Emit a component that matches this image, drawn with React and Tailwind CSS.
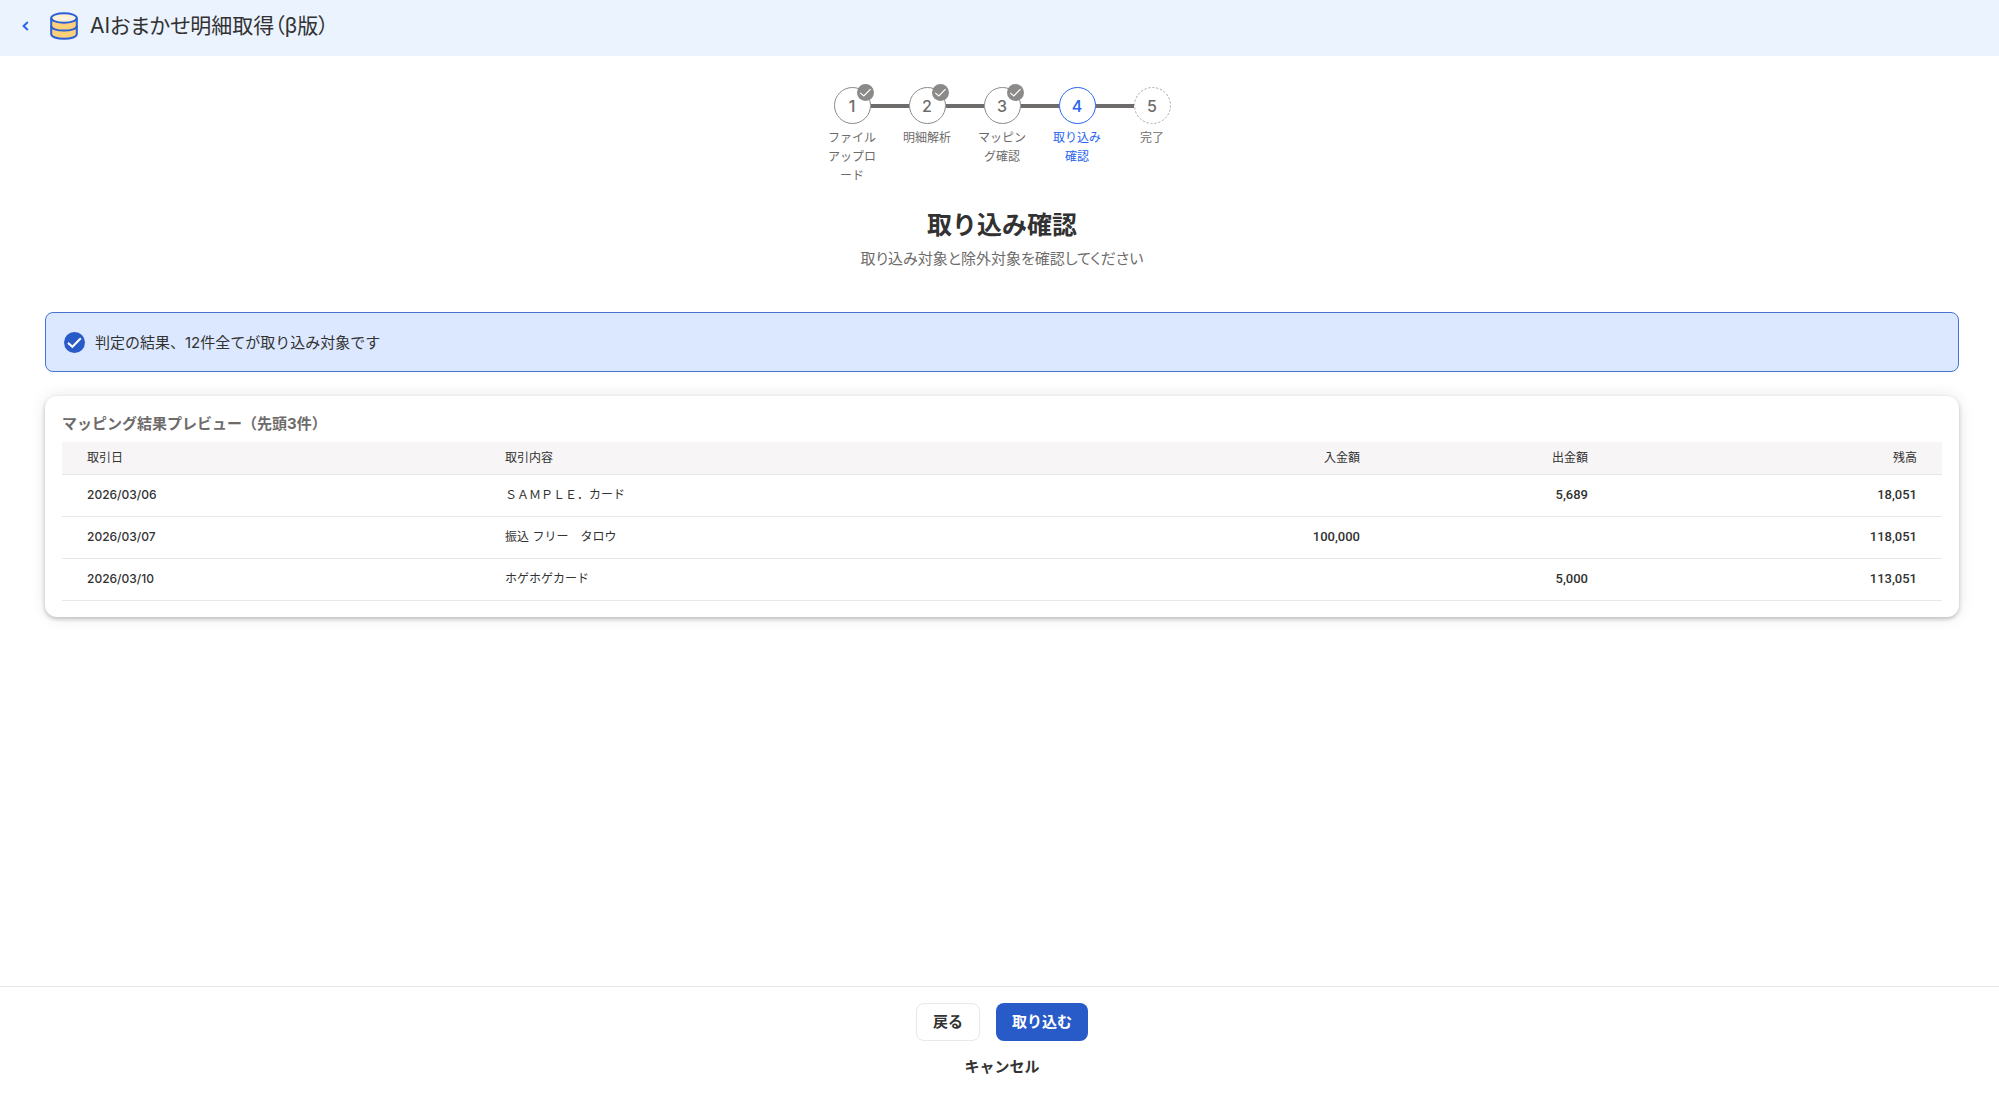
import clsx from "clsx";

const steps = [
  { label: "ファイルアップロード", state: "done" },
  { label: "明細解析", state: "done" },
  { label: "マッピング確認", state: "done" },
  { label: "取り込み確認", state: "current" },
  { label: "完了", state: "todo" },
];

const rows = [
  { date: "2026/03/06", detail: "ＳＡＭＰＬＥ．カード", deposit: "", withdrawal: "5,689", balance: "18,051" },
  { date: "2026/03/07", detail: "振込 フリー　タロウ", deposit: "100,000", withdrawal: "", balance: "118,051" },
  { date: "2026/03/10", detail: "ホゲホゲカード", deposit: "", withdrawal: "5,000", balance: "113,051" },
];

function CheckCircle({ className, strokeWidth = 2 }) {
  return (
    <svg viewBox="0 0 20 20" className={className} aria-hidden="true">
      <circle cx="10" cy="10" r="10" fill="currentColor" />
      <path d="M3.8 10.4 8 14 16 6" fill="none" stroke="#fff" strokeWidth={strokeWidth} />
    </svg>
  );
}

function DatabaseIcon() {
  return (
    <svg viewBox="0 0 28 28" className="size-7" aria-hidden="true">
      <path d="M1 5v18c0 2.4 5.8 4 13 4s13-1.6 13-4V5z" fill="#ffd07a" />
      <ellipse cx="14" cy="6" rx="12.8" ry="4.8" fill="#fff0d7" />
      <g fill="none" stroke="#2a5fd6" strokeWidth="2">
        <ellipse cx="14" cy="6" rx="12.8" ry="4.8" />
        <path d="M1.2 6v16c0 3 5.8 4.8 12.8 4.8s12.8-1.8 12.8-4.8V6" />
        <path d="M1.2 14c0 2.8 5.8 4.6 12.8 4.6s12.8-1.8 12.8-4.6" />
      </g>
    </svg>
  );
}

function Header() {
  return (
    <header className="flex h-14 items-center bg-[#ebf3ff] px-5 pb-1">
      <button type="button" aria-label="戻る" className="text-[#2864f0]">
        <svg viewBox="0 0 12 12" className="size-3" aria-hidden="true">
          <path d="M7.8 2 3.6 6 7.8 10" fill="none" stroke="currentColor" strokeWidth="2" />
        </svg>
      </button>
      <div className="ml-[18px] flex items-center gap-3">
        <DatabaseIcon />
        <h1 className="text-[21px] leading-8 [font-feature-settings:'palt']">AIおまかせ明細取得（β版）</h1>
      </div>
    </header>
  );
}

function Stepper() {
  return (
    <ol className="flex justify-center">
      {steps.map(({ label, state }, i) => (
        <li
          key={label}
          aria-current={state === "current" ? "step" : undefined}
          className={clsx("w-[75px]", state === "current" ? "text-[#2864f0]" : "text-[#6e6b6b]")}
        >
          <div className="flex items-center">
            <span className={clsx("h-1 flex-1", i > 0 && "bg-[#6e6b6b]")} />
            <span
              className={clsx(
                "relative flex size-[37px] items-center justify-center rounded-full border text-base font-medium",
                state === "done" && "border-[#8c8989]",
                state === "current" && "border-[#2864f0]",
                state === "todo" && "border-transparent"
              )}
            >
              {i + 1}
              {state === "done" && (
                <CheckCircle strokeWidth={1.4} className="absolute -top-1 -right-1 size-[17px] text-[#8c8989]" />
              )}
              {state === "todo" && (
                <svg viewBox="0 0 37 37" className="absolute -inset-px size-[37px]" aria-hidden="true">
                  <circle cx="18.5" cy="18.5" r="18" fill="none" stroke="#aaa7a7" strokeDasharray="2.2 1.8" />
                </svg>
              )}
            </span>
            <span className={clsx("h-1 flex-1", i < steps.length - 1 && "bg-[#6e6b6b]")} />
          </div>
          <p className="mx-auto mt-1 w-[50px] text-center text-xs leading-[19px] break-all">{label}</p>
        </li>
      ))}
    </ol>
  );
}

function Amount({ children }) {
  return (
    <td className="px-[25px] text-right font-['Roboto',sans-serif] text-[13px] font-medium tabular-nums">{children}</td>
  );
}

function PreviewTable() {
  return (
    <section className="rounded-xl bg-white px-[17px] py-4 shadow-[0_0_16px_rgba(0,0,0,0.1),0_2px_4px_rgba(0,0,0,0.22)]">
      <h3 className="mb-[7px] text-[15px] leading-[23px] font-bold text-[#6e6b6b]">
        マッピング結果プレビュー（先頭3件）
      </h3>
      <table className="w-full table-fixed text-xs">
        <thead>
          <tr className="h-8 border-b border-[#e9e7e7] bg-[#f7f5f5] text-left">
            <th className="w-[418px] px-[25px] font-normal">取引日</th>
            <th className="px-[25px] font-normal">取引内容</th>
            <th className="w-[228px] px-[25px] text-right font-normal">入金額</th>
            <th className="w-[228px] px-[25px] text-right font-normal">出金額</th>
            <th className="w-[329px] px-[25px] text-right font-normal">残高</th>
          </tr>
        </thead>
        <tbody>
          {rows.map((row) => (
            <tr key={row.date} className="h-[42px] border-b border-[#e9e7e7]">
              <td className="px-[25px] font-medium">{row.date}</td>
              <td className="px-[25px]">{row.detail}</td>
              <Amount>{row.deposit}</Amount>
              <Amount>{row.withdrawal}</Amount>
              <Amount>{row.balance}</Amount>
            </tr>
          ))}
        </tbody>
      </table>
    </section>
  );
}

export default function App() {
  return (
    <div className="flex min-h-screen flex-col bg-white font-['Inter','Noto_Sans_CJK_JP',sans-serif] text-[#323232]">
      <Header />
      <main className="flex-1 pt-[31px] pr-10 pl-[45px]">
        <Stepper />
        <div className="mt-[21px] text-center">
          <h2 className="text-[25px] leading-[38px] font-bold">取り込み確認</h2>
          <p className="mt-[3px] text-[15px] leading-[23px] text-[#6e6b6b] [font-feature-settings:'palt']">
            取り込み対象と除外対象を確認してください
          </p>
        </div>
        <div
          role="status"
          className="mt-[42px] flex h-[60px] items-center gap-[10px] rounded-lg border border-[#4673d2] bg-[#dce8ff] px-[18px]"
        >
          <CheckCircle className="size-[21px] text-[#285ac8]" />
          <p className="text-[15px] leading-[23px]">判定の結果、12件全てが取り込み対象です</p>
        </div>
        <div className="mt-6">
          <PreviewTable />
        </div>
      </main>
      <footer className="flex h-[107px] flex-col items-center border-t border-[#e9e7e7] pt-4 pl-[5px] text-[15px] font-bold">
        <div className="flex gap-4">
          <button type="button" className="h-[38px] rounded-lg border border-[#e9e7e7] px-4">
            戻る
          </button>
          <button type="button" className="h-[38px] rounded-lg bg-[#285ac8] px-4 text-white">
            取り込む
          </button>
        </div>
        <button type="button" className="mt-[14px] leading-[23px]">
          キャンセル
        </button>
      </footer>
    </div>
  );
}
